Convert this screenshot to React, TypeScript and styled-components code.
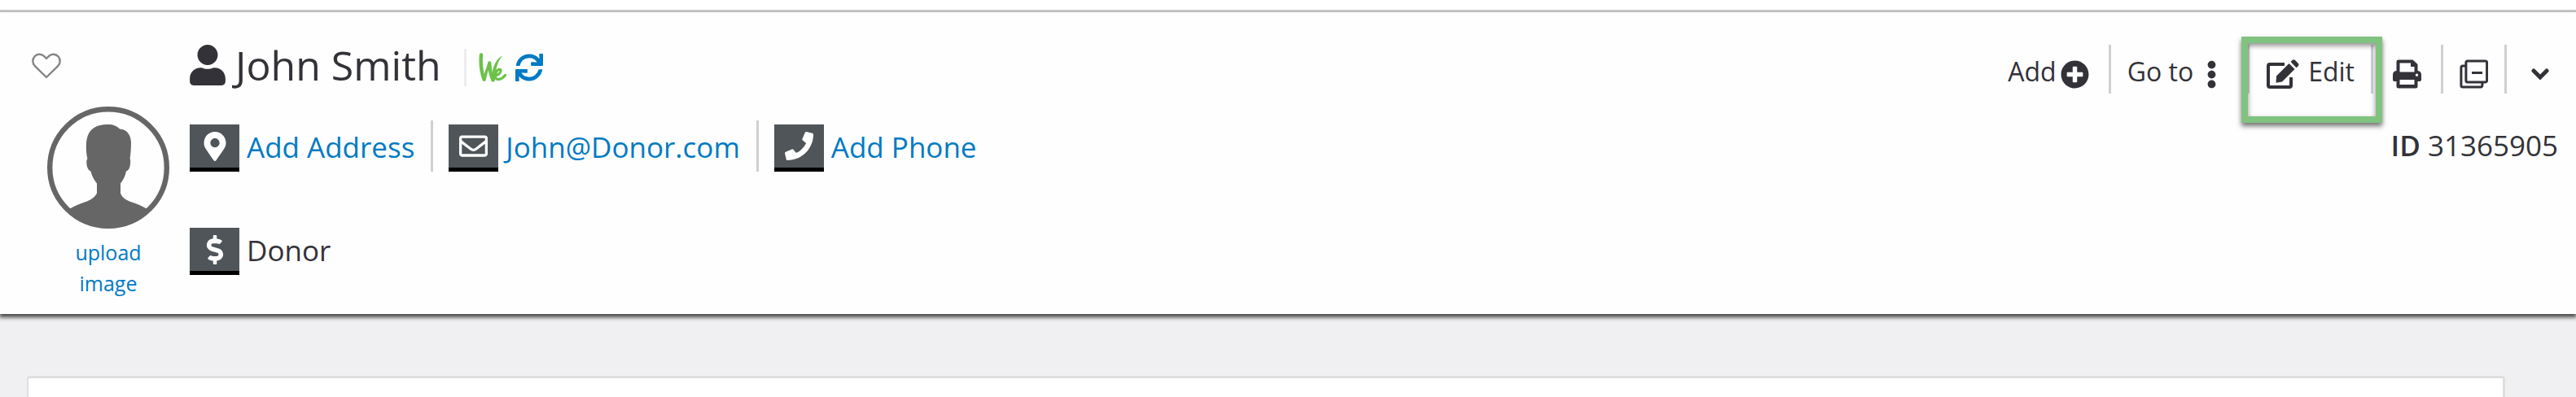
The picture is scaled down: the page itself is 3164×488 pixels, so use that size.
import React from "react";
import styled, { createGlobalStyle } from "styled-components";
import {
  FaUser,
  FaMapMarkerAlt,
  FaRegEnvelope,
  FaPhone,
  FaDollarSign,
  FaSync,
  FaEllipsisV,
  FaPlusCircle,
} from "react-icons/fa";

const ink = "#333238";
const link = "#007ac3";
const rule = "#d0d0d2";

const GlobalStyle = createGlobalStyle`
  * { box-sizing: border-box; }
  body {
    margin: 0;
    background: #f0f0f2;
    color: ${ink};
    font-family: "Open Sans", sans-serif;
  }
  svg { display: block; flex: none; }
`;

const TopStrip = styled.div`
  height: 15px;
  background: #fff;
  border-bottom: 3px solid ${rule};
`;

const Header = styled.header`
  display: flex;
  align-items: flex-start;
  min-height: 371px;
  padding-right: 22px;
  background: #fefefe;
  box-shadow: 0 3px 5px 1px #444;
`;

const PlainButton = styled.button`
  display: flex;
  align-items: center;
  padding: 0;
  border: 0;
  background: none;
  color: inherit;
  font: inherit;
  cursor: pointer;
`;

const Aside = styled.div`
  display: flex;
  flex-direction: column;
  align-items: flex-start;
  flex: none;
  width: 233px;
  padding: 50px 24px 0 39px;
`;

const Profile = styled.div`
  display: flex;
  flex-direction: column;
  align-items: center;
  width: 150px;
  margin: 34px 0 0 19px;
`;

const UploadLink = styled.a`
  width: 100px;
  margin-top: 10px;
  color: ${link};
  font-size: 25px;
  line-height: 38px;
  text-align: center;
  text-decoration: none;
`;

const Main = styled.div`
  flex: 1;
  padding-top: 29px;
`;

const TitleRow = styled.div`
  display: flex;
  align-items: center;
  height: 72px;
`;

const PersonIcon = styled(FaUser)`
  width: 44px;
  height: 50px;
`;

const Name = styled.h1`
  margin: 0 0 0 12px;
  font-size: 50px;
  font-weight: 400;
  line-height: 68px;
`;

const Tools = styled.div`
  display: flex;
  align-items: center;
  gap: 11px;
  height: 46px;
  margin: 6px 0 0 28px;
  padding-left: 15px;
  border-left: 3px solid #ededee;
`;

const InfoRow = styled.ul<{ $gap: number }>`
  display: flex;
  align-items: flex-end;
  margin: ${(p) => p.$gap}px 0 0;
  padding: 0;
  list-style: none;
`;

const InfoItem = styled.li`
  display: flex;
  align-items: flex-end;
  height: 63px;
  & + & {
    margin-left: 20px;
    padding-left: 19px;
    border-left: 3px solid ${rule};
  }
`;

const Badge = styled.span`
  display: flex;
  align-items: center;
  justify-content: center;
  width: 61px;
  height: 58px;
  margin-right: 9px;
  border-bottom: 5px solid #000;
  background: #4f5558;
  color: #fff;
`;

const InfoLink = styled.a`
  color: ${link};
  font-size: 35px;
  line-height: 60px;
  text-decoration: none;
`;

const InfoText = styled.span`
  font-size: 35px;
  line-height: 60px;
`;

const Side = styled.div`
  display: flex;
  flex-direction: column;
  align-items: flex-end;
  flex: none;
  padding-top: 40px;
`;

const Toolbar = styled.nav`
  display: flex;
  height: 60px;
`;

const Action = styled(PlainButton)<{ $left: number; $right: number; $gap?: number }>`
  gap: ${(p) => p.$gap ?? 0}px;
  padding: 12px ${(p) => p.$right}px 0 ${(p) => p.$left}px;
  & + &, span + & {
    border-left: 3px solid ${rule};
  }
`;

const ActionLabel = styled.span`
  padding-bottom: 6px;
  font-size: 32px;
  line-height: 42px;
`;

const DotsIcon = styled(FaEllipsisV)`
  width: 13px;
  height: 35px;
`;

const HighlightedSlot = styled.span`
  display: flex;
  position: relative;
  border-left: 3px solid ${rule};
`;

const Highlight = styled.span`
  position: absolute;
  inset: -10px -14px -36px -10px;
  border: 8px solid #80c280;
  box-shadow: 0 4px 6px rgba(0, 0, 0, 0.55), inset 0 3px 6px rgba(0, 0, 0, 0.45);
  pointer-events: none;
`;

const RecordId = styled.div`
  margin-top: 37px;
  font-size: 35px;
  line-height: 54px;
`;

const IdLabel = styled.span`
  font-weight: 600;
`;

const Card = styled.main`
  min-height: 26px;
  margin: 76px 87px 0 33px;
  background: #fff;
  border: solid #dfdfdf;
  border-width: 3px 3px 0 2px;
  border-radius: 4px 4px 0 0;
`;

const HeartIcon = () => (
  <svg width="36" height="32" viewBox="0 0 36 32" fill="none" stroke="#858585" strokeWidth="2.4" strokeLinejoin="round">
    <path d="M18 30 3.8 16.2C.6 13 .6 7.6 3.4 4.5 6.6 1 12 .9 15.2 4.1L18 7l2.8-2.9C24 .9 29.4 1 32.6 4.5c2.8 3.1 2.8 8.5-.4 11.7Z" />
  </svg>
);

const Portrait = () => (
  <svg width="150" height="150" viewBox="0 0 150 150">
    <defs>
      <clipPath id="portrait">
        <circle cx="75" cy="75" r="74" />
      </clipPath>
    </defs>
    <g clipPath="url(#portrait)">
      <path
        fill="#666"
        d="M75 22C81 22 86 24 89 27.500 98 28 103 35 103 45c0 7-.6 13-1.400 19 1 1.500.6 6-.2 10-.7 3-2.500 5-4.400 5.500-1 5.500-3.500 10.500-7 15v12c2 6 8 9 14 11 7 2.500 13 5 18 8l12 9-20 24H46L16 134.500l12-9c5-3 11-5.500 18-8 6-2 12-5 15-11V94.500c-4-5-6.500-10-7.500-15-2.300-.8-3.800-3-4.600-6-.8-4-1-7.500.5-9.500C48 58 47.600 52 48 45 49 29 58 22 75 22Z"
      />
    </g>
    <circle cx="75" cy="75" r="71.8" fill="none" stroke="#666" strokeWidth="6.4" />
  </svg>
);

const WeLogo = () => (
  <svg width="34" height="38" viewBox="0 0 34 38" fill="none" stroke="#6cc24a" strokeLinecap="round" strokeLinejoin="round">
    <path strokeWidth="4.4" d="M3 3.500C2 14 3.500 25 6.500 33.500" />
    <path strokeWidth="3.4" d="M7 34C8.500 26 10.500 20 13 14" />
    <path strokeWidth="4.4" d="M13.200 13.500C13.500 21 14.500 28 17.500 34.500" />
    <path fill="#6cc24a" stroke="none" d="M16 35C15.500 22 20 8 29.500 4.500 23.500 10 20 22 20 35Z" />
    <path strokeWidth="3.2" d="M21.500 28.500c3-1 6-3.500 5.500-6s-4.500-1-6 3c-1.500 6 0 8.500 4 8 3-.5 5.500-2.500 7.500-5" />
  </svg>
);

const EditIcon = () => (
  <svg width="40" height="36" viewBox="0 0 40 36">
    <path d="M22 6H4Q2 6 2 8v24q0 2 2 2h24q2 0 2-2V22" fill="none" stroke={ink} strokeWidth="4" />
    <path d="m12 20.500L27.500 5 34.500 12 19 27.500 11.500 28.800Z" fill={ink} />
    <path d="m29.500 3 2-2q1.800-1.500 3.500 0l3.700 3.700q1.500 1.800 0 3.500l-2.200 2Z" fill={ink} />
  </svg>
);

const PrintIcon = () => (
  <svg width="35" height="36" viewBox="0 0 35 36">
    <path
      fill={ink}
      fillRule="evenodd"
      d="M7 .5h17.500L30.500 6v8q4.500.5 4.500 5v6q0 2-2 2h-2.500v6q0 2.500-2.500 2.500H7Q4.500 35.500 4.500 33v-6H2q-2 0-2-2v-6q0-4.500 4.500-5V3Q4.500.5 7 .5ZM8.500 4.500v11h18V9H22V4.500ZM8.500 25v6h18v-6ZM29.500 17.500a1.700 1.700 0 1 0 .01 0Z"
    />
  </svg>
);

const CopyMinusIcon = () => (
  <svg width="35" height="36" viewBox="0 0 35 36" fill="none" stroke={ink} strokeWidth="3">
    <rect x="7.9" y="1.9" width="25.7" height="26" rx="2" />
    <path d="M7.500 8H3.900q-2 0-2 2v22q0 2 2 2h22q2 0 2-2v-3.500M15 16.500h13" />
  </svg>
);

const ChevronIcon = () => (
  <svg width="22" height="16" viewBox="0 0 22 16" fill="none" stroke={ink} strokeWidth="5" strokeLinecap="round">
    <path d="m3 4 8 8 8-8" />
  </svg>
);

export default function App() {
  return (
    <>
      <GlobalStyle />
      <TopStrip />
      <Header>
        <Aside>
          <PlainButton aria-label="Favorite">
            <HeartIcon />
          </PlainButton>
          <Profile>
            <Portrait />
            <UploadLink href="#upload">upload image</UploadLink>
          </Profile>
        </Aside>
        <Main>
          <TitleRow>
            <PersonIcon />
            <Name>John Smith</Name>
            <Tools>
              <WeLogo />
              <PlainButton aria-label="Refresh">
                <FaSync size={34} color={link} />
              </PlainButton>
            </Tools>
          </TitleRow>
          <InfoRow $gap={32}>
            <InfoItem>
              <Badge><FaMapMarkerAlt size={36} /></Badge>
              <InfoLink href="#address">Add Address</InfoLink>
            </InfoItem>
            <InfoItem>
              <Badge><FaRegEnvelope size={35} /></Badge>
              <InfoLink href="#email">John@Donor.com</InfoLink>
            </InfoItem>
            <InfoItem>
              <Badge><FaPhone size={35} /></Badge>
              <InfoLink href="#phone">Add Phone</InfoLink>
            </InfoItem>
          </InfoRow>
          <InfoRow $gap={64}>
            <InfoItem>
              <Badge><FaDollarSign size={36} /></Badge>
              <InfoText>Donor</InfoText>
            </InfoItem>
          </InfoRow>
        </Main>
        <Side>
          <Toolbar aria-label="Record actions">
            <Action $left={0} $right={24} $gap={5}>
              <ActionLabel>Add</ActionLabel>
              <FaPlusCircle size={35} />
            </Action>
            <Action $left={20} $right={37} $gap={16}>
              <ActionLabel>Go to</ActionLabel>
              <DotsIcon />
            </Action>
            <HighlightedSlot>
              <Action $left={21} $right={20} $gap={11}>
                <EditIcon />
                <ActionLabel>Edit</ActionLabel>
              </Action>
              <Highlight />
            </HighlightedSlot>
            <Action $left={24} $right={24} aria-label="Print">
              <PrintIcon />
            </Action>
            <Action $left={20} $right={20} aria-label="Collapse all">
              <CopyMinusIcon />
            </Action>
            <Action $left={30} $right={11} aria-label="More">
              <ChevronIcon />
            </Action>
          </Toolbar>
          <RecordId>
            <IdLabel>ID</IdLabel> 31365905
          </RecordId>
        </Side>
      </Header>
      <Card />
    </>
  );
}
